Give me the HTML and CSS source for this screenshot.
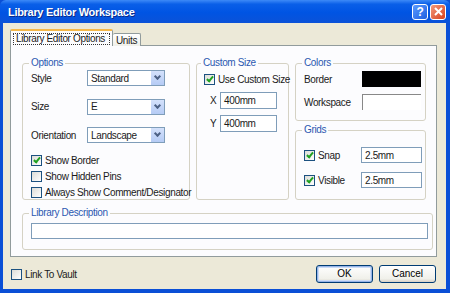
FILE: index.html
```html
<!DOCTYPE html>
<html lang="en">
<head>
    <meta charset="UTF-8">
    <title>Library Editor Workspace</title>
    <link rel="stylesheet" href="styles.css">
</head>
<body>
    <div class="window">
        <div class="titlebar">
            <span class="title">Library Editor Workspace</span>
            <div class="caption-buttons">
                <span class="cap-btn help">?</span>
                <span class="cap-btn close">
                    <svg width="9" height="9" viewBox="0 0 9 9"><path d="M1 1L8 8M8 1L1 8" stroke="#fff" stroke-width="2"/></svg>
                </span>
            </div>
        </div>

        <div class="client">
            <div class="tabs">
                <div class="tab active"><span class="focus">Library Editor Options</span></div>
                <div class="tab">Units</div>
            </div>

            <div class="panel">
                <div class="top-row">
                    <fieldset class="group options">
                        <legend>Options</legend>
                        <div class="field-row first">
                            <span class="label">Style</span>
                            <div class="select"><span>Standard</span><span class="drop"></span></div>
                        </div>
                        <div class="field-row">
                            <span class="label">Size</span>
                            <div class="select"><span>E</span><span class="drop"></span></div>
                        </div>
                        <div class="field-row">
                            <span class="label">Orientation</span>
                            <div class="select"><span>Landscape</span><span class="drop"></span></div>
                        </div>
                        <div class="checks">
                            <label class="check"><span class="box checked"></span>Show Border</label>
                            <label class="check"><span class="box"></span>Show Hidden Pins</label>
                            <label class="check"><span class="box"></span>Always Show Comment/Designator</label>
                        </div>
                    </fieldset>

                    <fieldset class="group custom">
                        <legend>Custom Size</legend>
                        <label class="check use-custom"><span class="box checked"></span>Use Custom Size</label>
                        <div class="xy-row">
                            <span class="xy">X</span>
                            <div class="input small">400mm</div>
                        </div>
                        <div class="xy-row">
                            <span class="xy">Y</span>
                            <div class="input small">400mm</div>
                        </div>
                    </fieldset>

                    <div class="right-col">
                        <fieldset class="group colors">
                            <legend>Colors</legend>
                            <div class="color-row">
                                <span class="label">Border</span>
                                <span class="swatch black"></span>
                            </div>
                            <div class="color-row">
                                <span class="label">Workspace</span>
                                <span class="swatch white"></span>
                            </div>
                        </fieldset>
                        <fieldset class="group grids">
                            <legend>Grids</legend>
                            <div class="grid-row">
                                <label class="check"><span class="box checked"></span>Snap</label>
                                <div class="input grid-input">2.5mm</div>
                            </div>
                            <div class="grid-row">
                                <label class="check"><span class="box checked"></span>Visible</label>
                                <div class="input grid-input">2.5mm</div>
                            </div>
                        </fieldset>
                    </div>
                </div>

                <fieldset class="group description">
                    <legend>Library Description</legend>
                    <div class="input wide"></div>
                </fieldset>
            </div>

            <div class="footer">
                <label class="check vault"><span class="box"></span>Link To Vault</label>
                <div class="buttons">
                    <button class="btn default">OK</button>
                    <button class="btn">Cancel</button>
                </div>
            </div>
        </div>
    </div>
</body>
</html>
```

FILE: styles.css
```css
* {
    box-sizing: border-box;
}
body {
    margin: 0;
    font-family: 'Liberation Sans', Arial, sans-serif;
    font-size: 10px;
    letter-spacing: -0.35px;
    color: #1a1a1a;
    background: #fff;
}
.window {
    width: 450px;
    height: 293px;
    background: #0a4fd6;
    display: flex;
    flex-direction: column;
    padding: 0 4px 4px 3px;
}
.titlebar {
    height: 23px;
    margin: 0 -4px 0 -3px;
    padding: 0 4px 0 8px;
    display: flex;
    align-items: center;
    justify-content: space-between;
    background: linear-gradient(#3d8af7 0%, #0a5fe8 18%, #0054e3 55%, #0b52d8 100%);
    border-radius: 6px 6px 0 0;
}
.title {
    color: #fff;
    font-weight: bold;
    font-size: 11px;
    letter-spacing: -0.3px;
    text-shadow: 1px 1px 0 #0b2a8a;
}
.caption-buttons {
    display: flex;
    gap: 2px;
}
.cap-btn {
    width: 16px;
    height: 16px;
    border: 1px solid #fff;
    border-radius: 3px;
    display: flex;
    align-items: center;
    justify-content: center;
    color: #fff;
    font-weight: bold;
    font-size: 12px;
}
.help {
    background: linear-gradient(135deg, #5b9bff, #1f5fe0);
}
.close {
    background: linear-gradient(135deg, #f39a7c, #d6401c);
}
.client {
    flex: 1;
    background: #ece9d8;
    padding: 6px 9px 0 7px;
    display: flex;
    flex-direction: column;
}
.tabs {
    display: flex;
    align-items: flex-end;
    height: 17px;
    position: relative;
    z-index: 1;
}
.tab {
    height: 13px;
    padding: 0 3px;
    border: 1px solid #919b9c;
    border-bottom: none;
    border-left: none;
    border-radius: 2px 2px 0 0;
    background: linear-gradient(#fff, #f0f0ea);
    display: flex;
    align-items: center;
    white-space: nowrap;
}
.tab.active {
    height: 17px;
    width: 103px;
    padding: 0 2px;
    border-left: 1px solid #919b9c;
    border-top: 2px solid #f5b84a;
    background: #fcfcfe;
}
.focus {
    border: 1px dotted #333;
    padding: 0 2px;
    line-height: 10px;
    width: 97px;
}
.panel {
    height: 212px;
    width: 427px;
    margin-top: -1px;
    background: #fcfcfe;
    border: 1px solid #919b9c;
    padding: 11px 4px 0 11px;
}
.top-row {
    display: flex;
    gap: 6px;
    height: 143px;
}
.group {
    margin: 0;
    border: 1px solid #d5d2c4;
    border-radius: 3px;
    padding: 0 8px;
    min-width: 0;
}
.group legend {
    color: #2b58b0;
    padding: 0 2px;
    margin-left: -2px;
    line-height: 12px;
}
.options {
    width: 168px;
}
.custom {
    width: 93px;
    padding: 0 6px;
}
.right-col {
    width: 131px;
    display: flex;
    flex-direction: column;
    gap: 3px;
}
.colors {
    height: 64px;
    padding-right: 4px;
}
.grids {
    flex: 1;
    padding-right: 3px;
}
.label {
    flex: 1;
}
.field-row {
    display: flex;
    align-items: center;
    height: 16px;
    margin-top: 12.5px;
}
.field-row .label {
    flex: none;
    width: 56px;
}
.field-row.first {
    margin-top: 1px;
}
.select {
    width: 78px;
    height: 16px;
    border: 1px solid #7f9db9;
    background: #fff;
    display: flex;
    align-items: center;
    justify-content: space-between;
    padding-left: 3px;
}
.drop {
    width: 14px;
    height: 14px;
    background: linear-gradient(#d4e1fb, #b5cbf5);
    border-left: 1px solid #fff;
    position: relative;
}
.drop::after {
    content: "";
    position: absolute;
    left: 4px;
    top: 3px;
    width: 3px;
    height: 3px;
    border-right: 2px solid #4d6185;
    border-bottom: 2px solid #4d6185;
    transform: rotate(45deg);
}
.checks {
    margin-top: 11px;
    display: flex;
    flex-direction: column;
    gap: 4px;
}
.check {
    display: flex;
    align-items: center;
    gap: 3px;
    height: 12px;
    white-space: nowrap;
}
.box {
    width: 11px;
    height: 11px;
    border: 1px solid #1c5180;
    background: linear-gradient(135deg, #dcdcd7, #fff);
    position: relative;
    flex: none;
}
.box.checked::after {
    content: "";
    position: absolute;
    left: 3px;
    top: 0;
    width: 2px;
    height: 5px;
    border-right: 2px solid #21a121;
    border-bottom: 2px solid #21a121;
    transform: rotate(40deg);
}
.use-custom {
    margin-top: 4px;
    margin-left: 1px;
}
.xy-row {
    display: flex;
    align-items: center;
    margin-top: 7px;
}
.xy-row + .xy-row {
    margin-top: 6px;
}
.xy {
    width: 17px;
    padding-left: 7px;
}
.input {
    height: 17px;
    border: 1px solid #7f9db9;
    background: #fff;
    padding-left: 3px;
    display: flex;
    align-items: center;
}
.small {
    width: 57px;
}
.color-row {
    display: flex;
    align-items: center;
    margin-top: 2px;
}
.color-row + .color-row {
    margin-top: 7px;
}
.swatch {
    width: 59px;
    height: 16px;
}
.black {
    background: #000;
}
.white {
    background: #fff;
    border-left: 1px solid #888;
    border-top: 1px solid #888;
}
.grid-row {
    display: flex;
    align-items: center;
    justify-content: space-between;
    margin-top: 11px;
}
.grid-row + .grid-row {
    margin-top: 9px;
}
.grid-input {
    width: 61px;
    height: 16px;
}
.description {
    margin-top: 7px;
    width: 411px;
    height: 43px;
    padding-right: 4px;
}
.wide {
    margin-top: 4px;
    height: 16px;
}
.footer {
    flex: 1;
    display: flex;
    align-items: center;
    justify-content: space-between;
    padding-left: 1px;
    padding-right: 1px;
}
.vault {
    margin-top: 3px;
}
.buttons {
    display: flex;
    gap: 6px;
    margin-top: 1px;
}
.btn {
    width: 57px;
    height: 18px;
    font: inherit;
    color: #000;
    border: 1px solid #003c74;
    border-radius: 3px;
    background: linear-gradient(#fff, #f0f0ea 80%, #d6d0c5);
    padding: 0;
}
.btn.default {
    box-shadow: inset 0 0 0 1px #97b5e8, inset 0 0 0 2px #cddcf5;
}
```
